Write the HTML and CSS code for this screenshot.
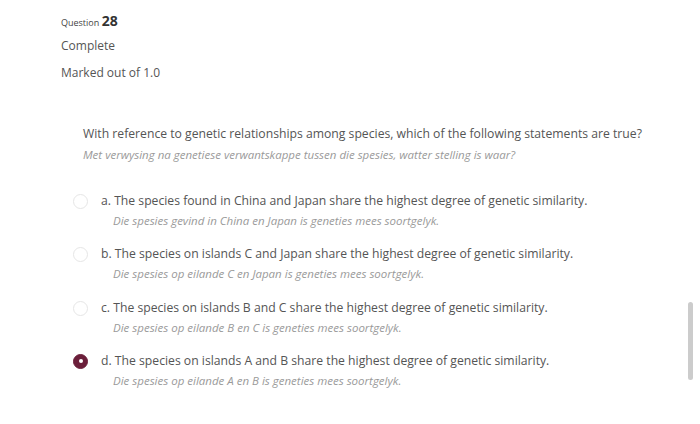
FILE: index.html
```html
<!DOCTYPE html>
<html lang="en">
<head>
  <meta charset="UTF-8" />
  <title>Question 28</title>
  <link rel="stylesheet" href="styles.css">
</head>
<body>
  <div class="info">
    <h3 class="qno">Question <span class="qnum">28</span></h3>
    <div class="state">Complete</div>
    <div class="grade">Marked out of 1.0</div>
  </div>

  <div class="formulation">
    <div class="qtext">
      <p>With reference to genetic relationships among species, which of the following statements are true?</p>
      <p class="af">Met verwysing na genetiese verwantskappe tussen die spesies, watter stelling is waar?</p>
    </div>

    <div class="answer">
      <div class="option">
        <span class="radio"></span>
        <div class="label">
          <p>a. The species found in China and Japan share the highest degree of genetic similarity.</p>
          <p class="af">Die spesies gevind in China en Japan is geneties mees soortgelyk.</p>
        </div>
      </div>
      <div class="option">
        <span class="radio"></span>
        <div class="label">
          <p>b. The species on islands C and Japan share the highest degree of genetic similarity.</p>
          <p class="af">Die spesies op eilande C en Japan is geneties mees soortgelyk.</p>
        </div>
      </div>
      <div class="option">
        <span class="radio"></span>
        <div class="label">
          <p>c. The species on islands B and C share the highest degree of genetic similarity.</p>
          <p class="af">Die spesies op eilande B en C is geneties mees soortgelyk.</p>
        </div>
      </div>
      <div class="option">
        <span class="radio checked"></span>
        <div class="label">
          <p>d. The species on islands A and B share the highest degree of genetic similarity.</p>
          <p class="af">Die spesies op eilande A en B is geneties mees soortgelyk.</p>
        </div>
      </div>
    </div>
  </div>

  <div class="scrollbar"></div>
</body>
</html>
```

FILE: styles.css
```css
* {
  box-sizing: border-box;
}

body {
  margin: 0;
  background: #fff;
  color: #555;
  font-family: "Open Sans", sans-serif;
  position: relative;
  height: 424px;
  overflow: hidden;
}

p {
  margin: 0;
}

/* Question info */
.info {
  padding: 11px 0 0 61px;
}

.qno {
  margin: 0;
  font-size: 9px;
  font-weight: 400;
  color: #444;
  line-height: 20px;
}

.qnum {
  font-size: 14px;
  font-weight: 700;
  color: #333;
}

.state {
  margin-top: 4px;
  font-size: 12px;
  line-height: 18px;
  color: #555;
}

.grade {
  margin-top: 9px;
  font-size: 12px;
  line-height: 18px;
  color: #555;
}

/* Question body */
.formulation {
  margin: 41px 0 0 83px;
}

.qtext p {
  font-size: 12.2px;
  line-height: 21px;
}

.qtext p.af,
.label p.af {
  font-style: italic;
  color: #9a9a9a;
  font-size: 11.5px;
}

.answer {
  margin-top: 26px;
}

.option {
  display: flex;
  align-items: flex-start;
  margin-left: -10px;
  height: 53.3px;
}

.radio {
  width: 15px;
  height: 15px;
  margin-top: 3px;
  border-radius: 50%;
  border: 1px solid #e6e6e6;
  flex-shrink: 0;
  display: flex;
  align-items: center;
  justify-content: center;
}

.radio.checked {
  background: #6b1f3a;
  border-color: #6b1f3a;
}

.radio.checked::after {
  content: "";
  width: 4px;
  height: 4px;
  border-radius: 50%;
  background: #fff;
}

.label {
  margin-left: 13px;
}

.label p {
  font-size: 12.2px;
  line-height: 20px;
}

.label p.af {
  margin-left: 12px;
}

.scrollbar {
  position: absolute;
  left: 688px;
  top: 302px;
  width: 5px;
  height: 78px;
  border-radius: 3px;
  background: #cccccc;
}
```
